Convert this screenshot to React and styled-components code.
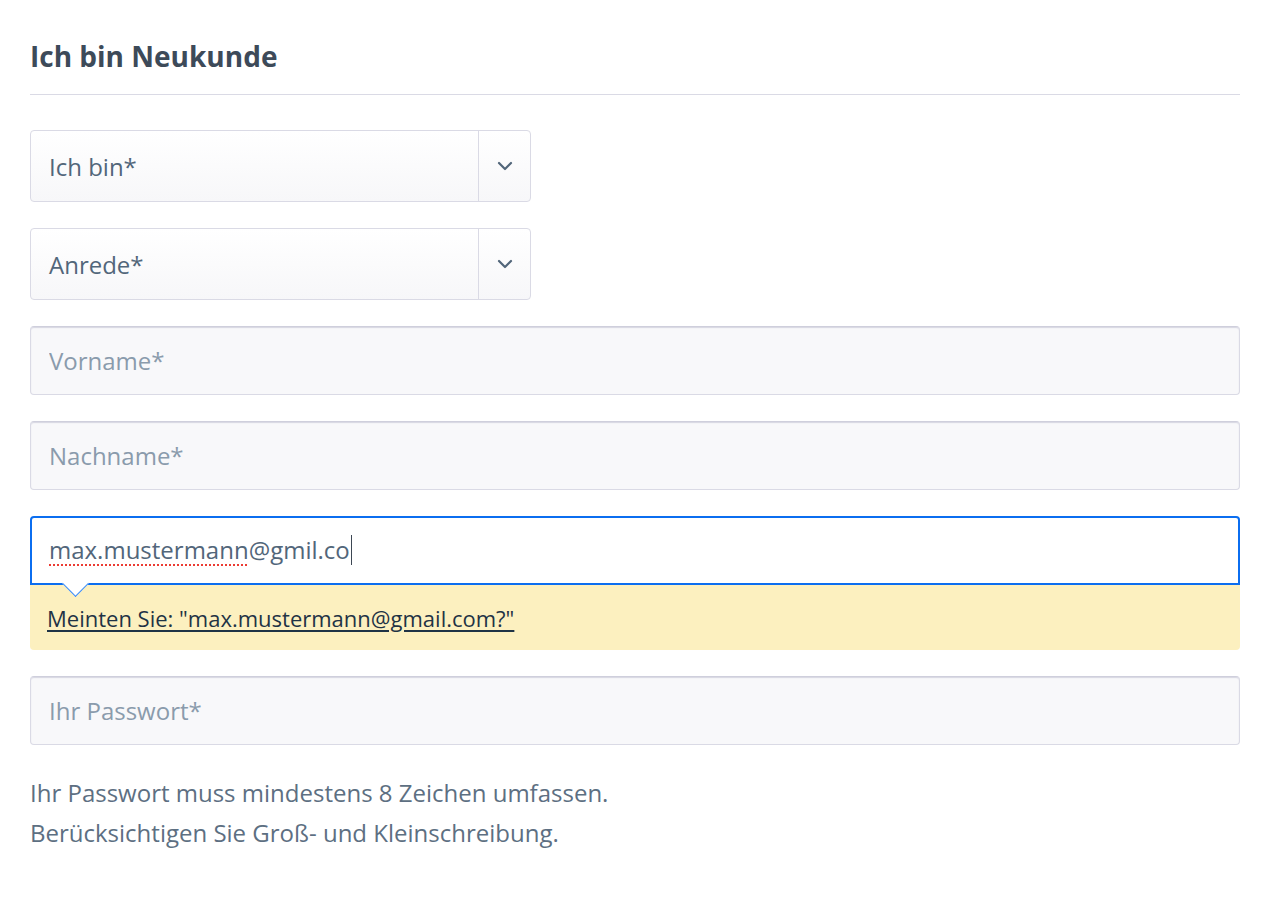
import React from "react";
import styled, { createGlobalStyle } from "styled-components";

const Global = createGlobalStyle`
  html, body { margin: 0; padding: 0; background: #fff; }
  body { font-family: "Open Sans", "Noto Sans", sans-serif; }
  * { box-sizing: border-box; }
`;

const Page = styled.div`
  padding: 30px 28px 40px 30px;
  width: 1268px;
`;

const Heading = styled.h2`
  margin: 0;
  font-size: 28px;
  font-weight: 700;
  color: #3d4a59;
  line-height: 52px;
  padding-bottom: 12px;
  border-bottom: 1px solid #dadae5;
`;

const Form = styled.div`
  display: flex;
  flex-direction: column;
  gap: 26px;
  padding-top: 35px;
`;

const SelectBox = styled.div`
  width: 501px;
  height: 72px;
  display: flex;
  align-items: stretch;
  border: 1px solid #dadae5;
  border-radius: 4px;
  background: linear-gradient(#ffffff, #f7f7f9);
  color: #52667a;
  font-size: 24px;
`;

const SelectLabel = styled.div`
  flex: 1;
  display: flex;
  align-items: center;
  padding-left: 18px;
`;

const SelectArrow = styled.div`
  width: 52px;
  border-left: 1px solid #dadae5;
  display: flex;
  align-items: center;
  justify-content: center;
`;

const TextInput = styled.input`
  display: block;
  width: 100%;
  height: 69px;
  border: 1px solid #dadae5;
  border-top-color: #cfcfdc;
  box-shadow: inset 0 1px 1px #d6d6e2;
  border-radius: 4px;
  background: #f8f8fa;
  padding: 0 18px;
  font-family: inherit;
  font-size: 24px;
  color: #52667a;
  outline: none;
  &::placeholder { color: #8a9bac; }
`;

const EmailGroup = styled.div`
  display: flex;
  flex-direction: column;
`;

const FocusedField = styled.div`
  height: 69px;
  border: 2px solid #0b6ef0;
  border-radius: 4px 4px 0 0;
  background: #fff;
  padding: 0 17px 2px;
  display: flex;
  align-items: center;
  font-size: 24px;
  color: #52667a;
`;

const Misspelled = styled.span`
  text-decoration-line: underline;
  text-decoration-style: dotted;
  text-decoration-color: #ec3b33;
  text-decoration-thickness: 2px;
  text-underline-offset: 5px;
`;

const Caret = styled.span`
  display: inline-block;
  width: 1px;
  height: 30px;
  background: #3d4754;
  margin-left: 1px;
`;

const Hint = styled.div`
  position: relative;
  height: 65px;
  background: #fcf0bf;
  border-radius: 0 0 4px 4px;
  padding-left: 17px;
  display: flex;
  align-items: center;
  &::before {
    content: "";
    position: absolute;
    left: 36px;
    top: -11px;
    width: 18px;
    height: 18px;
    background: #fff;
    border-right: 1px solid #3a8bf5;
    border-bottom: 1px solid #3a8bf5;
    transform: rotate(45deg);
  }
`;

const HintLink = styled.a`
  color: #1f3345;
  font-size: 22px;
  text-decoration: underline;
  text-underline-offset: 3px;
  cursor: pointer;
`;

const HelpText = styled.p`
  margin: 28px 0 0;
  font-size: 24px;
  line-height: 40px;
  color: #5d6f82;
`;

const Chevron = () => (
  <svg width="16" height="10" viewBox="0 0 16 10" fill="none">
    <path d="M2 2l6 6 6-6" stroke="#52667a" strokeWidth="2.2" strokeLinecap="round" strokeLinejoin="round" />
  </svg>
);

const Select = ({ label }) => (
  <SelectBox>
    <SelectLabel>{label}</SelectLabel>
    <SelectArrow>
      <Chevron />
    </SelectArrow>
  </SelectBox>
);

export default function App() {
  return (
    <Page>
      <Global />
      <Heading>Ich bin Neukunde</Heading>
      <Form>
        <Select label="Ich bin*" />
        <Select label="Anrede*" />
        <TextInput placeholder="Vorname*" />
        <TextInput placeholder="Nachname*" />
        <EmailGroup>
          <FocusedField>
            <Misspelled>max.mustermann</Misspelled>@gmil.co
            <Caret />
          </FocusedField>
          <Hint>
            <HintLink>Meinten Sie: "max.mustermann@gmail.com?"</HintLink>
          </Hint>
        </EmailGroup>
        <TextInput placeholder="Ihr Passwort*" type="password" />
      </Form>
      <HelpText>
        Ihr Passwort muss mindestens 8 Zeichen umfassen.
        <br />
        Berücksichtigen Sie Groß- und Kleinschreibung.
      </HelpText>
    </Page>
  );
}
